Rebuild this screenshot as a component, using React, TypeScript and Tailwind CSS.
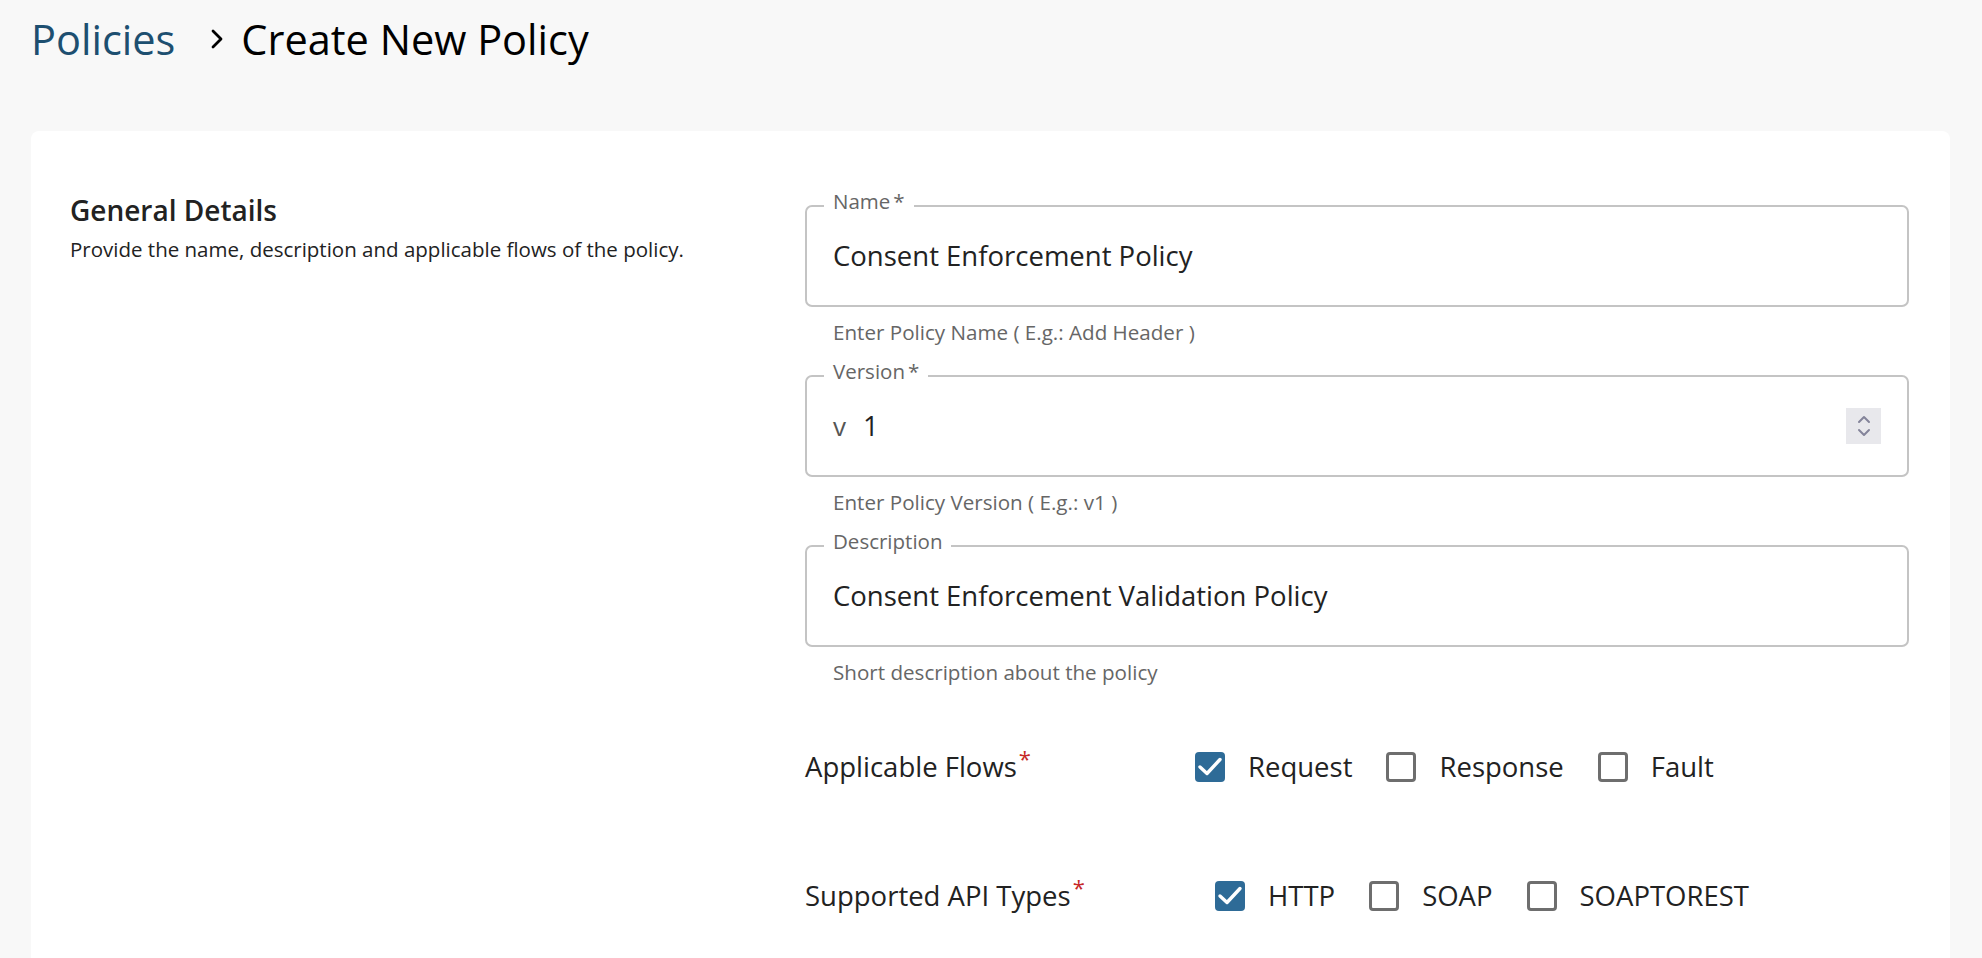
import React from "react";

function Check({ checked }: { checked: boolean }) {
  if (checked) {
    return (
      <span className="flex h-[30px] w-[30px] shrink-0 items-center justify-center rounded-[4px] bg-[#2e6b97]">
        <svg width="30" height="30" viewBox="0 0 30 30" fill="none">
          <path d="M5 15 L12 21.5 L25 7.5" stroke="#ffffff" strokeWidth="3.4" strokeLinecap="round" strokeLinejoin="round" />
        </svg>
      </span>
    );
  }
  return <span className="block h-[30px] w-[30px] shrink-0 rounded-[4px] border-[3px] border-[#6e6e6e] bg-white" />;
}

function Option({ label, checked }: { label: string; checked: boolean }) {
  return (
    <div className="flex items-center">
      <Check checked={checked} />
      <span className="ml-[23px] mr-[34px] text-[27.5px] leading-[40px] text-[#222222]">{label}</span>
    </div>
  );
}

function Field({
  label,
  required,
  helper,
  children,
}: {
  label: string;
  required?: boolean;
  helper: string;
  children: React.ReactNode;
}) {
  return (
    <div>
      <div className="relative flex h-[102px] items-center rounded-[7px] border-2 border-[#c4c4c4] px-[26px]">
        <span className="absolute -top-[19px] left-[17px] bg-white px-[9px] text-[20.5px] leading-[26px] text-[#666666]">
          {label}
          {required ? <span className="ml-[3px]">*</span> : null}
        </span>
        {children}
      </div>
      <div className="mt-[12px] pl-[28px] text-[20.6px] leading-[26px] text-[#666666]">{helper}</div>
    </div>
  );
}

export default function App() {
  return (
    <div className="h-[958px] overflow-hidden bg-[#f8f8f8] font-['Open_Sans',sans-serif]">
      <div className="flex h-[131px] items-start pl-[31px] pt-[12px]">
        <span className="text-[41.5px] leading-[54px] text-[#1d4f70]">Policies</span>
        <span className="ml-[35px] mr-[17px] flex h-[54px] items-center">
          <svg width="14" height="22" viewBox="0 0 14 22" fill="none">
            <path d="M3 3 L11 11 L3 19" stroke="#000000" strokeWidth="2.8" strokeLinecap="round" strokeLinejoin="round" />
          </svg>
        </span>
        <span className="text-[41.5px] leading-[54px] text-black">Create New Policy</span>
      </div>

      <div className="ml-[31px] mr-[32px] flex h-[900px] rounded-[8px] bg-white pl-[39px] pr-[41px]">
        <div className="w-[735px] shrink-0 pt-[61px]">
          <div className="text-[28px] font-semibold leading-[36px] text-[#222222]">General Details</div>
          <div className="mt-[7px] text-[20.5px] leading-[28px] text-[#222222]">
            Provide the name, description and applicable flows of the policy.
          </div>
        </div>

        <div className="flex-1 pt-[74px]">
          <Field label="Name" required helper="Enter Policy Name ( E.g.: Add Header )">
            <span className="text-[27.5px] text-[#222222]">Consent Enforcement Policy</span>
          </Field>

          <div className="mt-[30px]">
            <Field label="Version" required helper="Enter Policy Version ( E.g.: v1 )">
              <span className="mr-[17px] text-[26px] text-[#555555]">v</span>
              <span className="flex-1 text-[27.5px] text-[#222222]">1</span>
              <span className="flex h-[36px] w-[35px] flex-col items-center justify-center bg-[#e8e8ec]">
                <svg width="16" height="26" viewBox="0 0 16 26" fill="none">
                  <path d="M3 9 L8 4 L13 9" stroke="#84849a" strokeWidth="2" strokeLinecap="round" strokeLinejoin="round" />
                  <path d="M3 17 L8 22 L13 17" stroke="#84849a" strokeWidth="2" strokeLinecap="round" strokeLinejoin="round" />
                </svg>
              </span>
            </Field>
          </div>

          <div className="mt-[30px]">
            <Field label="Description" helper="Short description about the policy">
              <span className="text-[27.5px] text-[#222222]">Consent Enforcement Validation Policy</span>
            </Field>
          </div>

          <div className="mt-[62px] flex h-[40px] items-center">
            <div className="w-[390px] shrink-0 text-[27.5px] leading-[40px] text-[#222222]">
              Applicable Flows
              <span className="relative -top-[10px] ml-[2px] text-[22px] text-[#c62828]">*</span>
            </div>
            <Option label="Request" checked />
            <Option label="Response" checked={false} />
            <Option label="Fault" checked={false} />
          </div>

          <div className="mt-[89px] flex h-[40px] items-center">
            <div className="w-[410px] shrink-0 text-[27.5px] leading-[40px] text-[#222222]">
              Supported API Types
              <span className="relative -top-[10px] ml-[2px] text-[22px] text-[#c62828]">*</span>
            </div>
            <Option label="HTTP" checked />
            <Option label="SOAP" checked={false} />
            <Option label="SOAPTOREST" checked={false} />
          </div>
        </div>
      </div>
    </div>
  );
}
